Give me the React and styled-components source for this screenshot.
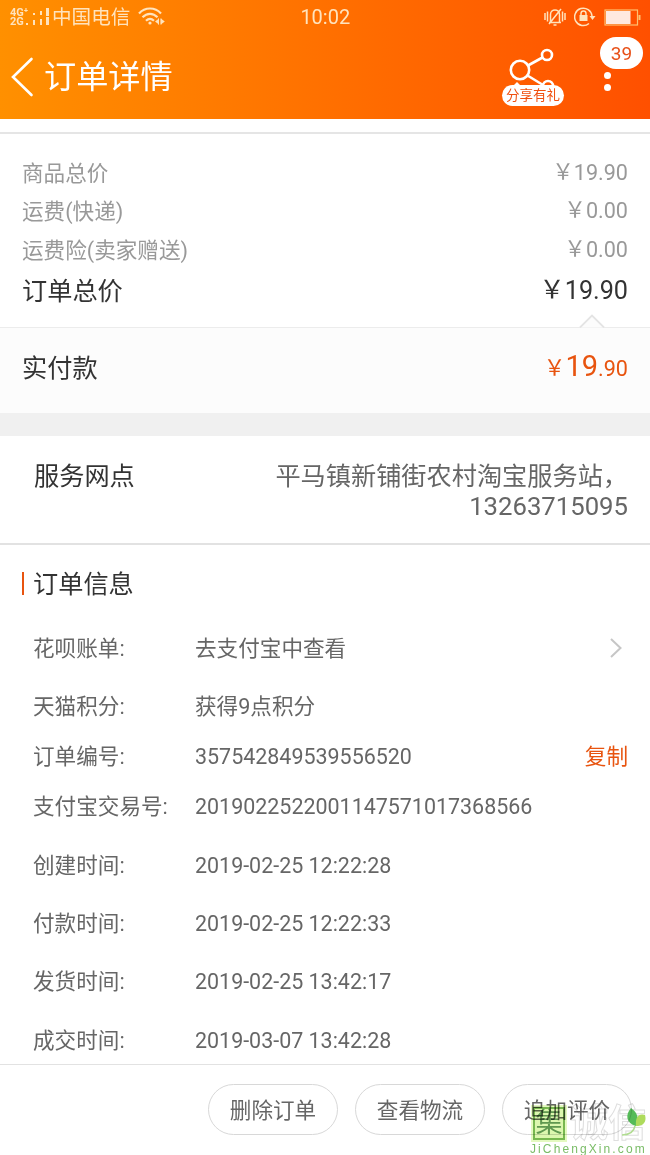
import React from 'react'
import styled, { createGlobalStyle } from 'styled-components'

const prices = [
  { label: '商品总价', value: '19.90' },
  { label: '运费(快递)', value: '0.00' },
  { label: '运费险(卖家赠送)', value: '0.00' },
  { label: '订单总价', value: '19.90', total: true },
]

const orderInfo = [
  { label: '花呗账单:', value: '去支付宝中查看', height: 59, link: true },
  { label: '天猫积分:', value: '获得9点积分', height: 58 },
  { label: '订单编号:', value: '357542849539556520', height: 42, copy: true },
  { label: '支付宝交易号:', value: '2019022522001147571017368566', height: 58 },
  { label: '创建时间:', value: '2019-02-25 12:22:28', height: 59 },
  { label: '付款时间:', value: '2019-02-25 12:22:33', height: 58 },
  { label: '发货时间:', value: '2019-02-25 13:42:17', height: 58 },
  { label: '成交时间:', value: '2019-03-07 13:42:28', height: 59 },
]

const SignalIcon = () => (
  <svg width="24" height="18" viewBox="0 0 24 18" fill="currentColor">
    <path d="M7 5h2v2H7zM14 3h2v4h-2zM20 0h3v8h-3zM0 15h2v2H0zM7 12h2v5H7zM14 11h2v6h-2zM20 9h3v8h-3z" />
  </svg>
)

const WifiIcon = () => (
  <svg width="28" height="20" viewBox="0 0 28 20" fill="none" stroke="currentColor" strokeWidth="2.2">
    <path d="M1 6.5C7-.2 17-.2 23 6.5M4.500 10.300C9 5.600 15 5.600 19.500 10.300M8 13.800C10.500 11.300 13.500 11.300 16 13.800" />
    <circle cx="12" cy="16" r="1.600" fill="currentColor" stroke="none" />
    <path d="M20.500 11.500v6M23 11.500v6" strokeWidth="1" />
    <path d="M21 11.500v6l-4-3zM22.800 11.500v6l4-3z" fill="currentColor" stroke="none" />
  </svg>
)

const MuteIcon = () => (
  <svg width="22" height="20" viewBox="0 0 22 20" fill="none" stroke="currentColor" strokeWidth="1.500">
    <path d="M5 15.500h12M6.500 15V7.500c0-6 9-6 9 0V15M9.500 18h3M17 2L5 17M1 6v7M3.500 4.500v10M18.500 4.500v10M21 6v7" />
  </svg>
)

const LockIcon = () => (
  <svg width="22" height="20" viewBox="0 0 22 20" fill="none" stroke="currentColor" strokeWidth="1.500">
    <path d="M15 16.500A8.700 8.700 0 1 1 18 9" />
    <path d="M15.500 9h6l-3 4z" fill="currentColor" stroke="none" />
    <path d="M7 8V6.500c0-3.500 5-3.500 5 0V8" />
    <path d="M5.500 8h8v6h-8z" fill="currentColor" stroke="none" />
  </svg>
)

const BatteryIcon = () => (
  <svg width="37" height="17" viewBox="0 0 37 17" fill="none" stroke="#ffc070" strokeWidth="1.200">
    <rect x="1" y="1" width="32.500" height="15" />
    <rect x="2" y="2" width="24.500" height="13" fill="#ffe9e0" stroke="none" />
    <path d="M35.500 6v5" strokeWidth="2" />
  </svg>
)

const BackIcon = () => (
  <svg width="23" height="40" viewBox="0 0 23 40" fill="none" stroke="currentColor" strokeWidth="2.600">
    <path d="M20.500 2L2 20l18.500 18" strokeLinecap="round" />
  </svg>
)

const ShareIcon = () => (
  <svg width="46" height="44" viewBox="0 0 46 44" fill="none" stroke="currentColor" strokeWidth="2.600">
    <circle cx="11" cy="23" r="9.200" />
    <circle cx="38" cy="8" r="5" />
    <circle cx="39" cy="39" r="5" />
    <path d="M19 18.500L33.500 10.500M18.500 28.500L34 38" />
    <path d="M3 40l5-5 5 5z" fill="currentColor" stroke="none" />
  </svg>
)

const Leaf = () => (
  <svg width="24" height="30" viewBox="0 0 24 30">
    <path d="M9 0C15 4 18 11 14 18C4 15 3 7 9 0z" fill="#55bb58" />
    <path d="M14 18C13 9 17 5 23 7C25 14 21 18 14 18z" fill="#aedb5c" />
    <path d="M13 18C12 23 8 27 0 27" fill="none" stroke="#b0dc90" strokeWidth="1.500" />
  </svg>
)

const App = () => {
  return (
    <Page>
      <GlobalStyle />
      <Header>
        <StatusBar>
          <Network>
            <span>4G⁺</span>
            <span>2G</span>
          </Network>
          <SignalIcon />
          <Carrier>中国电信</Carrier>
          <WifiIcon />
          <Clock>10:02</Clock>
          <StatusIcons>
            <MuteIcon />
            <LockIcon />
            <BatteryIcon />
          </StatusIcons>
        </StatusBar>
        <NavBar>
          <BackIcon />
          <h1>订单详情</h1>
          <Share>
            <ShareIcon />
            <ShareLabel>分享有礼</ShareLabel>
          </Share>
          <More>
            <Dot />
            <Dot />
            <Badge>39</Badge>
          </More>
        </NavBar>
      </Header>

      <Content>
        <PriceSection>
          {prices.map((item) => (
            <PriceRow key={item.label} $total={item.total}>
              <span>{item.label}</span>
              <Price>
                <Yen>￥</Yen>
                {item.value}
              </Price>
            </PriceRow>
          ))}
        </PriceSection>
        <Payment>
          <Notch viewBox="0 0 26 14">
            <path d="M1 13.500L13 1.500L25 13.500" fill="#fcfcfc" stroke="#e4e4e4" strokeWidth="1.800" />
          </Notch>
          <span>实付款</span>
          <Paid>
            <Yen>￥</Yen>
            <strong>19</strong>.90
          </Paid>
        </Payment>
        <Gap />
        <Service>
          <span>服务网点</span>
          <address>
            平马镇新铺街农村淘宝服务站，
            <Phone>13263715095</Phone>
          </address>
        </Service>
        <InfoSection>
          <h2>订单信息</h2>
          {orderInfo.map((item) => (
            <InfoRow key={item.label} $height={item.height}>
              <span>{item.label}</span>
              <Value $digits={/^\d/.test(item.value)}>{item.value}</Value>
              {item.link && (
                <Chevron viewBox="0 0 12 20">
                  <path d="M1 1l9.500 9L1 19" fill="none" stroke="#c6c6c6" strokeWidth="2" />
                </Chevron>
              )}
              {item.copy && <Copy>复制</Copy>}
            </InfoRow>
          ))}
        </InfoSection>
      </Content>

      <Footer>
        <Button>删除订单</Button>
        <Button>查看物流</Button>
        <Button>追加评价</Button>
      </Footer>

      <Watermark>
        <Seal>集</Seal>
        <Ghost>诚信</Ghost>
        <LeafSlot>
          <Leaf />
        </LeafSlot>
        <Site>JiChengXin.com</Site>
      </Watermark>
    </Page>
  )
}

const GlobalStyle = createGlobalStyle`
  * {
    box-sizing: border-box;
  }
  body {
    margin: 0;
    background: #fff;
    font-family: Roboto, 'Noto Sans CJK SC', sans-serif;
  }
  h1, h2 {
    margin: 0;
    font-weight: 400;
  }
  svg {
    flex: none;
    display: block;
  }
`

const Page = styled.main`
  position: relative;
  display: flex;
  flex-direction: column;
  width: 650px;
  height: 1155px;
  overflow: hidden;
  font-size: 21.6px;
  color: #666;
`

const Header = styled.header`
  flex: none;
  height: 119px;
  background: linear-gradient(90deg, #ff9000, #ff5000);
  color: #fff;
`

const StatusBar = styled.div`
  display: flex;
  align-items: center;
  height: 34px;
  padding-left: 10px;
  color: #ffe3bd;
`

const Network = styled.div`
  display: flex;
  flex-direction: column;
  width: 16px;
  font-size: 11px;
  font-weight: 700;
  line-height: 9px;
  white-space: nowrap;
`

const Carrier = styled.span`
  margin: 0 8px 0 2px;
  padding-top: 2px;
  font-size: 19.6px;
  line-height: 32px;
`

const Clock = styled.time`
  margin-left: 134px;
  font-size: 20px;
`

const StatusIcons = styled.div`
  display: flex;
  align-items: center;
  gap: 8px;
  margin-left: auto;
  padding-right: 9px;
`

const NavBar = styled.nav`
  display: flex;
  align-items: center;
  height: 85px;
  padding-left: 11px;
  h1 {
    margin-left: 10px;
    font-size: 32.2px;
    line-height: 40px;
  }
`

const Share = styled.div`
  position: relative;
  width: 62px;
  height: 59px;
  margin-left: auto;
  padding-left: 7px;
`

const ShareLabel = styled.span`
  position: absolute;
  left: 0;
  bottom: 0;
  width: 62px;
  height: 21px;
  border-radius: 11px;
  background: #fff;
  color: #f05010;
  font-size: 13.5px;
  line-height: 20px;
  text-align: center;
`

const More = styled.div`
  position: relative;
  display: flex;
  flex-direction: column;
  align-items: center;
  gap: 5px;
  width: 86px;
  padding-top: 10px;
`

const Dot = styled.i`
  width: 7px;
  height: 7px;
  border-radius: 50%;
  background: #fff;
`

const Badge = styled.span`
  position: absolute;
  left: 36px;
  bottom: 22px;
  width: 43px;
  height: 32px;
  border-radius: 16px;
  background: #fff;
  color: #e85018;
  font-size: 19px;
  line-height: 33px;
  text-align: center;
`

const Content = styled.div`
  flex: 1;
  min-height: 0;
  overflow: hidden;
  padding-top: 13px;
`

const PriceSection = styled.section`
  height: 195px;
  padding: 18px 22px 0;
  border-top: 2px solid #e5e5e5;
`

const PriceRow = styled.div`
  display: flex;
  justify-content: space-between;
  align-items: center;
  height: ${(props) => (props.$total ? '42px' : '38.5px')};
  color: ${(props) => (props.$total ? '#333' : '#999')};
  font-size: ${(props) => (props.$total ? '25.2px' : '21.6px')};
`

const Price = styled.span`
  padding-bottom: 4px;
`

const Yen = styled.span`
  vertical-align: 1px;
`

const Payment = styled.section`
  position: relative;
  display: flex;
  justify-content: space-between;
  align-items: center;
  height: 86px;
  padding: 0 22px 10px;
  border-top: 1px solid #ececec;
  background: #fcfcfc;
  color: #333;
  font-size: 25.2px;
`

const Notch = styled.svg`
  position: absolute;
  right: 45px;
  top: -14px;
  width: 26px;
  height: 14px;
`

const Paid = styled.span`
  color: #e8540f;
  font-size: 21.6px;
  strong {
    font-size: 29px;
    font-weight: 400;
  }
`

const Gap = styled.div`
  height: 23px;
  background: #f0f0f0;
`

const Service = styled.section`
  display: flex;
  justify-content: space-between;
  height: 107px;
  padding: 26px 22px 0 34px;
  color: #333;
  font-size: 25.2px;
  line-height: 30px;
  address {
    color: #666;
    font-style: normal;
    text-align: right;
  }
`

const Phone = styled.div`
  font-size: 25.7px;
  line-height: 28px;
`

const InfoSection = styled.section`
  padding: 23px 22px 0 33px;
  border-top: 2px solid #e2e2e2;
  h2 {
    height: 51px;
    margin-left: -11px;
    color: #333;
    font-size: 25.2px;
    line-height: 33px;
  }
  h2::before {
    content: '';
    display: inline-block;
    width: 2px;
    height: 23px;
    margin-right: 9px;
    background: #e8540f;
    vertical-align: -2px;
  }
`

const InfoRow = styled.div`
  display: grid;
  grid-template-columns: 162px 1fr auto;
  align-items: center;
  height: ${(props) => props.$height}px;
  line-height: 32px;
`

const Value = styled.span`
  font-size: ${(props) => (props.$digits ? '21.45px' : '21.6px')};
`

const Chevron = styled.svg`
  width: 12px;
  height: 20px;
  margin: 0 6px 2px 0;
`

const Copy = styled.span`
  color: #e8540f;
`

const Footer = styled.footer`
  flex: none;
  display: flex;
  justify-content: flex-end;
  gap: 17px;
  height: 91px;
  padding: 19px 18px 0;
  border-top: 1px solid #e2e2e2;
  background: #fff;
`

const Button = styled.button`
  width: 130px;
  height: 51px;
  padding: 0 0 2px;
  border: 1px solid #d8d8d8;
  border-radius: 26px;
  background: #fff;
  color: #666;
  font-family: inherit;
  font-size: 21.6px;
`

const Watermark = styled.div`
  position: absolute;
  right: 0;
  bottom: 0;
  display: grid;
  grid-template-columns: 32px 1fr;
  gap: 3px 5px;
  width: 117px;
  height: 48px;
  mix-blend-mode: multiply;
`

const Seal = styled.span`
  height: 33px;
  border: 2px solid #78b850;
  outline: 2px solid rgba(210, 245, 150, 0.6);
  background: rgba(205, 243, 140, 0.7);
  color: #609850;
  font-size: 27px;
  line-height: 28px;
  text-align: center;
`

const Ghost = styled.span`
  color: transparent;
  font-size: 38px;
  font-weight: 700;
  line-height: 33px;
  -webkit-text-stroke: 1px #dedede;
`

const LeafSlot = styled.div`
  position: absolute;
  right: 4px;
  top: 1px;
`

const Site = styled.span`
  grid-column: 1 / -1;
  margin-left: -3px;
  color: #7bbd68;
  font-family: 'Liberation Sans', sans-serif;
  font-size: 12px;
  letter-spacing: 2.1px;
  line-height: 12px;
  white-space: nowrap;
`

export default App
